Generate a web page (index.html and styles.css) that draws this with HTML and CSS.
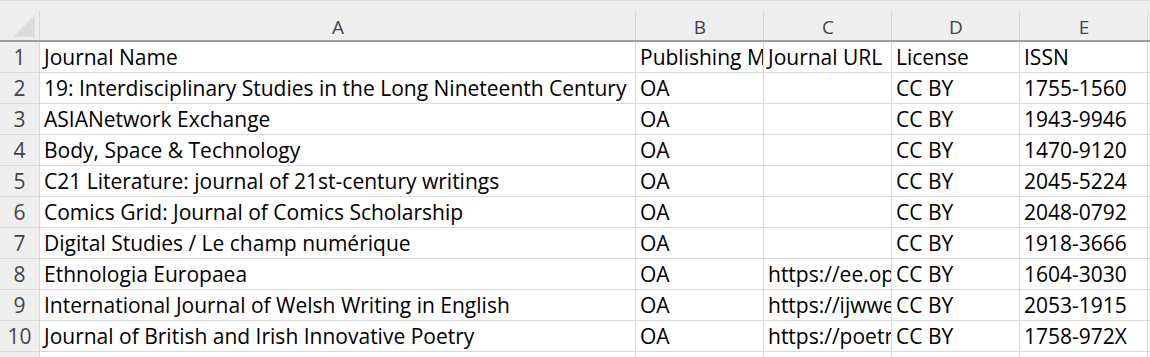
FILE: index.html
```html
<!DOCTYPE html>
<html lang="en">
<head>
  <meta charset="UTF-8" />
  <title>Journals - Sheet1</title>
  <link rel="stylesheet" href="styles.css">
</head>
<body>

  <div class="sheet">
    <!-- column headers -->
    <div class="head corner"><span class="tri"></span></div>
    <div class="head col">A</div>
    <div class="head col">B</div>
    <div class="head col">C</div>
    <div class="head col">D</div>
    <div class="head col">E</div>
    <div class="head rest"></div>

    <div class="num">1</div>
    <div class="cell">Journal Name</div>
    <div class="cell">Publishing Model</div>
    <div class="cell">Journal URL</div>
    <div class="cell">License</div>
    <div class="cell">ISSN</div>
    <div class="cell rest"></div>

    <div class="num">2</div>
    <div class="cell">19: Interdisciplinary Studies in the Long Nineteenth Century</div>
    <div class="cell">OA</div>
    <div class="cell"></div>
    <div class="cell">CC BY</div>
    <div class="cell">1755-1560</div>
    <div class="cell rest"></div>

    <div class="num">3</div>
    <div class="cell">ASIANetwork Exchange</div>
    <div class="cell">OA</div>
    <div class="cell"></div>
    <div class="cell">CC BY</div>
    <div class="cell">1943-9946</div>
    <div class="cell rest"></div>

    <div class="num">4</div>
    <div class="cell">Body, Space &amp; Technology</div>
    <div class="cell">OA</div>
    <div class="cell"></div>
    <div class="cell">CC BY</div>
    <div class="cell">1470-9120</div>
    <div class="cell rest"></div>

    <div class="num">5</div>
    <div class="cell">C21 Literature: journal of 21st-century writings</div>
    <div class="cell">OA</div>
    <div class="cell"></div>
    <div class="cell">CC BY</div>
    <div class="cell">2045-5224</div>
    <div class="cell rest"></div>

    <div class="num">6</div>
    <div class="cell">Comics Grid: Journal of Comics Scholarship</div>
    <div class="cell">OA</div>
    <div class="cell"></div>
    <div class="cell">CC BY</div>
    <div class="cell">2048-0792</div>
    <div class="cell rest"></div>

    <div class="num">7</div>
    <div class="cell">Digital Studies / Le champ numérique</div>
    <div class="cell">OA</div>
    <div class="cell"></div>
    <div class="cell">CC BY</div>
    <div class="cell">1918-3666</div>
    <div class="cell rest"></div>

    <div class="num">8</div>
    <div class="cell">Ethnologia Europaea</div>
    <div class="cell">OA</div>
    <div class="cell">https://ee.openlibhums.org</div>
    <div class="cell">CC BY</div>
    <div class="cell">1604-3030</div>
    <div class="cell rest"></div>

    <div class="num">9</div>
    <div class="cell">International Journal of Welsh Writing in English</div>
    <div class="cell">OA</div>
    <div class="cell">https://ijwwe.org</div>
    <div class="cell">CC BY</div>
    <div class="cell">2053-1915</div>
    <div class="cell rest"></div>

    <div class="num">10</div>
    <div class="cell">Journal of British and Irish Innovative Poetry</div>
    <div class="cell">OA</div>
    <div class="cell">https://poetry.openlibhums.org</div>
    <div class="cell">CC BY</div>
    <div class="cell">1758-972X</div>
    <div class="cell rest"></div>

    <div class="num"></div>
    <div class="cell"></div>
    <div class="cell"></div>
    <div class="cell"></div>
    <div class="cell"></div>
    <div class="cell"></div>
    <div class="cell rest"></div>
  </div>

</body>
</html>
```

FILE: styles.css
```css
:root {
  --grid: #d9d9d9;
  --head-bg: #efefef;
  --head-line: #9e9e9e;
  --head-text: #444;
}
body {
  margin: 0;
  padding: 0;
  background: #fff;
  font-family: 'Open Sans', 'Liberation Sans', sans-serif;
  overflow: hidden;
}
.sheet {
  display: grid;
  grid-template-columns: 40px 596px 128px 128px 128px 128px 1fr;
  grid-template-rows: 42px;
  grid-auto-rows: 31px;
  width: 1150px;
  height: 357px;
  overflow: hidden;
}
.head {
  position: relative;
  background: var(--head-bg);
  border-top: 1px solid #dcdcdc;
  border-bottom: 2px solid var(--head-line);
  box-sizing: border-box;
  color: var(--head-text);
  font-size: 19px;
  line-height: 1;
  display: flex;
  align-items: flex-end;
  justify-content: center;
  padding-bottom: 3px;
}
/* short separators between the column letters */
.head::after {
  content: "";
  position: absolute;
  right: 0;
  top: 10px;
  bottom: 0;
  width: 1px;
  background: var(--grid);
}
.head.rest::after {
  display: none;
}
.corner .tri {
  position: absolute;
  left: 13px;
  top: 14px;
  width: 22px;
  height: 22px;
  background: #dcdcdc;
  clip-path: polygon(100% 0, 100% 100%, 0 100%);
}
.num {
  background: var(--head-bg);
  border-right: 1px solid var(--grid);
  border-bottom: 1px solid var(--grid);
  box-sizing: border-box;
  color: var(--head-text);
  font-size: 21px;
  line-height: 1;
  display: flex;
  align-items: flex-end;
  justify-content: center;
  padding-bottom: 4px;
}
.cell {
  border-right: 1px solid var(--grid);
  border-bottom: 1px solid var(--grid);
  box-sizing: border-box;
  color: #000;
  font-size: 21px;
  line-height: 1;
  padding: 0 0 4px 4px;
  display: flex;
  align-items: flex-end;
  white-space: nowrap;
  overflow: hidden;
}
.cell.rest {
  border-right: none;
}
```
